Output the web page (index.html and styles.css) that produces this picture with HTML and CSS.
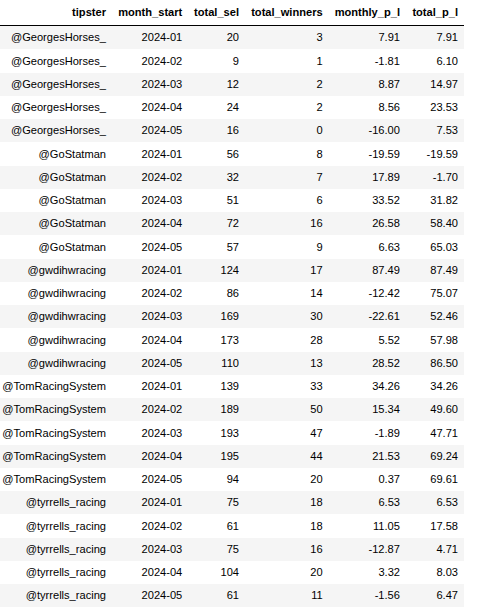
FILE: index.html
```html
<!DOCTYPE html>
<html>
<head>
<meta charset="utf-8">
<link rel="stylesheet" href="styles.css">
</head>
<body>
<table class="df">
<colgroup>
<col class="c-tipster"><col class="c-month"><col class="c-sel"><col class="c-win"><col class="c-mpl"><col class="c-tpl">
</colgroup>
<thead>
<tr><th>tipster</th><th>month_start</th><th>total_sel</th><th>total_winners</th><th>monthly_p_l</th><th>total_p_l</th></tr>
</thead>
<tbody>
<tr><td>@GeorgesHorses_</td><td>2024-01</td><td>20</td><td>3</td><td>7.91</td><td>7.91</td></tr>
<tr><td>@GeorgesHorses_</td><td>2024-02</td><td>9</td><td>1</td><td>-1.81</td><td>6.10</td></tr>
<tr><td>@GeorgesHorses_</td><td>2024-03</td><td>12</td><td>2</td><td>8.87</td><td>14.97</td></tr>
<tr><td>@GeorgesHorses_</td><td>2024-04</td><td>24</td><td>2</td><td>8.56</td><td>23.53</td></tr>
<tr><td>@GeorgesHorses_</td><td>2024-05</td><td>16</td><td>0</td><td>-16.00</td><td>7.53</td></tr>
<tr><td>@GoStatman</td><td>2024-01</td><td>56</td><td>8</td><td>-19.59</td><td>-19.59</td></tr>
<tr><td>@GoStatman</td><td>2024-02</td><td>32</td><td>7</td><td>17.89</td><td>-1.70</td></tr>
<tr><td>@GoStatman</td><td>2024-03</td><td>51</td><td>6</td><td>33.52</td><td>31.82</td></tr>
<tr><td>@GoStatman</td><td>2024-04</td><td>72</td><td>16</td><td>26.58</td><td>58.40</td></tr>
<tr><td>@GoStatman</td><td>2024-05</td><td>57</td><td>9</td><td>6.63</td><td>65.03</td></tr>
<tr><td>@gwdihwracing</td><td>2024-01</td><td>124</td><td>17</td><td>87.49</td><td>87.49</td></tr>
<tr><td>@gwdihwracing</td><td>2024-02</td><td>86</td><td>14</td><td>-12.42</td><td>75.07</td></tr>
<tr><td>@gwdihwracing</td><td>2024-03</td><td>169</td><td>30</td><td>-22.61</td><td>52.46</td></tr>
<tr><td>@gwdihwracing</td><td>2024-04</td><td>173</td><td>28</td><td>5.52</td><td>57.98</td></tr>
<tr><td>@gwdihwracing</td><td>2024-05</td><td>110</td><td>13</td><td>28.52</td><td>86.50</td></tr>
<tr><td>@TomRacingSystem</td><td>2024-01</td><td>139</td><td>33</td><td>34.26</td><td>34.26</td></tr>
<tr><td>@TomRacingSystem</td><td>2024-02</td><td>189</td><td>50</td><td>15.34</td><td>49.60</td></tr>
<tr><td>@TomRacingSystem</td><td>2024-03</td><td>193</td><td>47</td><td>-1.89</td><td>47.71</td></tr>
<tr><td>@TomRacingSystem</td><td>2024-04</td><td>195</td><td>44</td><td>21.53</td><td>69.24</td></tr>
<tr><td>@TomRacingSystem</td><td>2024-05</td><td>94</td><td>20</td><td>0.37</td><td>69.61</td></tr>
<tr><td>@tyrrells_racing</td><td>2024-01</td><td>75</td><td>18</td><td>6.53</td><td>6.53</td></tr>
<tr><td>@tyrrells_racing</td><td>2024-02</td><td>61</td><td>18</td><td>11.05</td><td>17.58</td></tr>
<tr><td>@tyrrells_racing</td><td>2024-03</td><td>75</td><td>16</td><td>-12.87</td><td>4.71</td></tr>
<tr><td>@tyrrells_racing</td><td>2024-04</td><td>104</td><td>20</td><td>3.32</td><td>8.03</td></tr>
<tr><td>@tyrrells_racing</td><td>2024-05</td><td>61</td><td>11</td><td>-1.56</td><td>6.47</td></tr>
</tbody>
</table>
</body>
</html>
```

FILE: styles.css
```css
html, body {
  margin: 0;
  padding: 0;
  background: #ffffff;
}
.df {
  border-collapse: collapse;
  border-spacing: 0;
  table-layout: fixed;
  width: 468px;
  margin-left: -4px;
  font-family: "Liberation Sans", Arial, sans-serif;
  font-size: 11.1px;
  color: #000000;
}
.c-tipster { width: 116px; }
.c-month { width: 76.3px; }
.c-sel { width: 56.7px; }
.c-win { width: 83.7px; }
.c-mpl { width: 77.3px; }
.c-tpl { width: 58px; }
.df th,
.df td {
  text-align: right;
  vertical-align: middle;
  padding: 5.25px 6px 5.25px 0;
  line-height: 12.75px;
  white-space: nowrap;
  overflow: visible;
}
.df th {
  font-weight: bold;
  padding-top: 6px;
  padding-bottom: 6.25px;
  border-bottom: 1px solid #000000;
}
.df tbody tr:nth-child(odd) {
  background: #f5f5f5;
}
```
